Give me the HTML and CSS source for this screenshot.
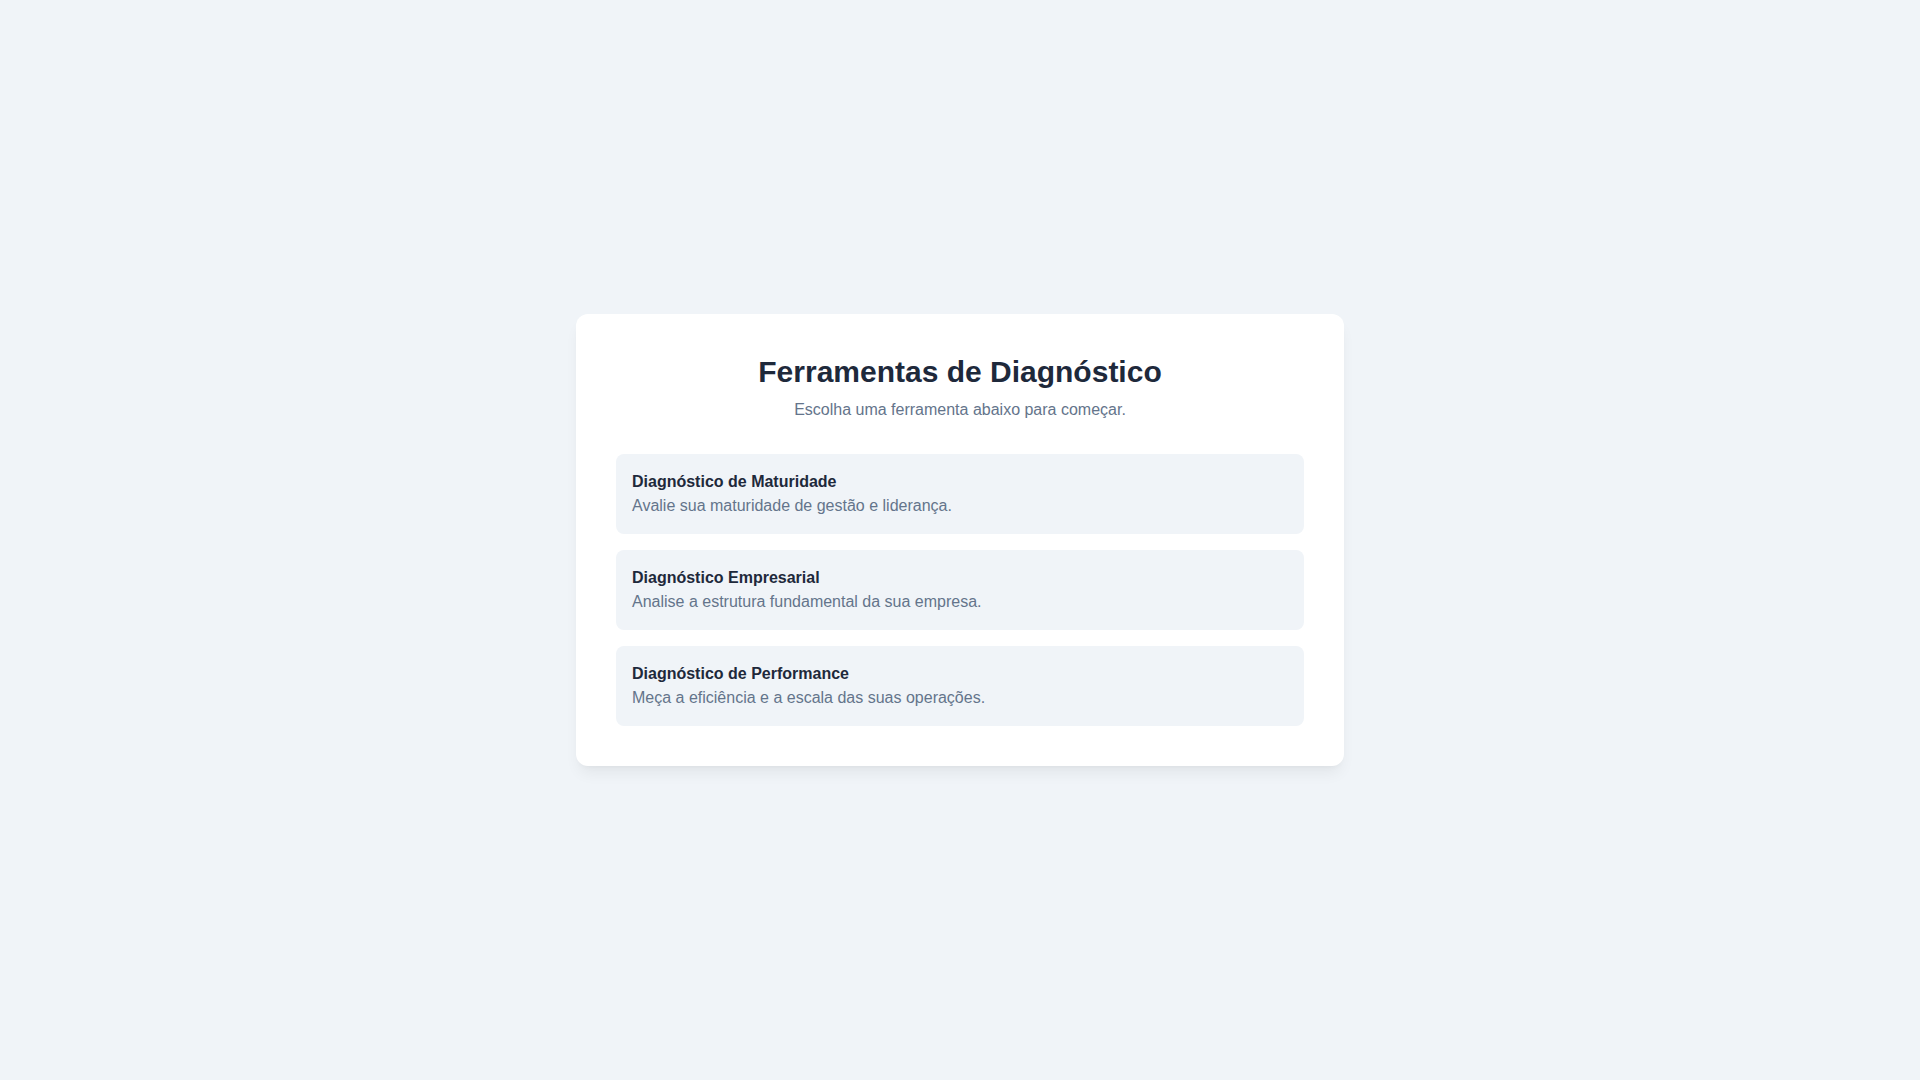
FILE: index.html
```html
<!DOCTYPE html>
<html lang="pt-BR">
<head>
<meta charset="utf-8">
<title>Ferramentas de Diagnóstico</title>
<link rel="stylesheet" href="styles.css">
</head>
<body>
<main class="page">
  <section class="card">
    <header class="head">
      <h1 class="title">Ferramentas de Diagnóstico</h1>
      <p class="subtitle">Escolha uma ferramenta abaixo para começar.</p>
    </header>
    <div class="list">
      <a class="item" href="#">
        <span class="item-title">Diagnóstico de Maturidade</span>
        <span class="item-desc">Avalie sua maturidade de gestão e liderança.</span>
      </a>
      <a class="item" href="#">
        <span class="item-title">Diagnóstico Empresarial</span>
        <span class="item-desc">Analise a estrutura fundamental da sua empresa.</span>
      </a>
      <a class="item" href="#">
        <span class="item-title">Diagnóstico de Performance</span>
        <span class="item-desc">Meça a eficiência e a escala das suas operações.</span>
      </a>
    </div>
  </section>
</main>
</body>
</html>
```
FILE: styles.css
```css
* { box-sizing: border-box; }
html, body { margin: 0; padding: 0; }
body {
  background: #f0f4f8;
  font-family: "Liberation Sans", Arial, sans-serif;
  color: #1e293b;
}
.page {
  min-height: 100vh;
  display: flex;
  align-items: center;
  justify-content: center;
}
.card {
  width: 768px;
  background: #ffffff;
  border-radius: 12px;
  padding: 40px;
  box-shadow: 0 10px 15px -3px rgba(0,0,0,0.06), 0 4px 6px -4px rgba(0,0,0,0.05);
}
.head { text-align: center; margin-bottom: 32px; }
.title {
  margin: 0 0 8px;
  font-size: 30px;
  line-height: 36px;
  font-weight: 700;
  color: #1e293b;
}
.subtitle {
  margin: 0;
  font-size: 16px;
  line-height: 24px;
  color: #64748b;
}
.list { display: flex; flex-direction: column; gap: 16px; }
.item {
  display: flex;
  flex-direction: column;
  padding: 16px;
  background: #f0f4f8;
  border-radius: 8px;
  text-decoration: none;
}
.item-title {
  font-size: 16px;
  line-height: 24px;
  font-weight: 700;
  color: #1e293b;
}
.item-desc {
  font-size: 16px;
  line-height: 24px;
  color: #64748b;
}
```
